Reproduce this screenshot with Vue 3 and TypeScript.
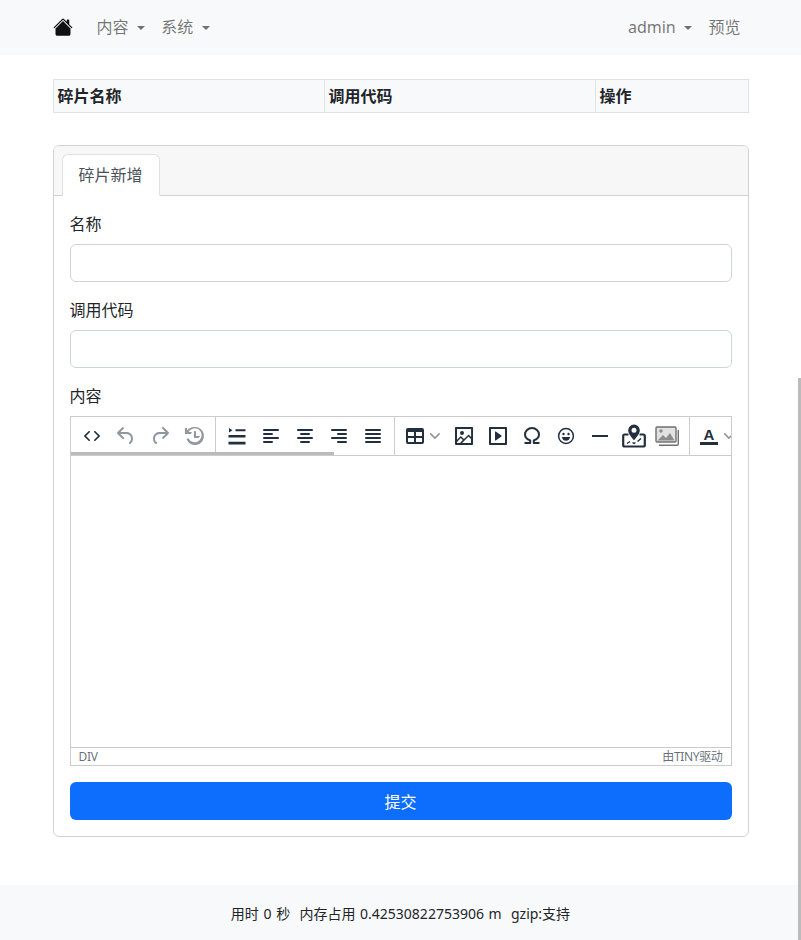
<script setup lang="ts">
interface Tool { name: string; paths: string[]; disabled?: boolean }

const alignLeft = 'M5 5h14a1 1 0 1 1 0 2H5a1 1 0 1 1 0-2zm0 4h8a1 1 0 1 1 0 2H5a1 1 0 1 1 0-2zm0 8h8a1 1 0 1 1 0 2H5a1 1 0 0 1 0-2zm0-4h14a1 1 0 1 1 0 2H5a1 1 0 0 1 0-2z'
const alignCenter = 'M5 5h14a1 1 0 1 1 0 2H5a1 1 0 1 1 0-2zm3 4h8a1 1 0 1 1 0 2H8a1 1 0 1 1 0-2zm0 8h8a1 1 0 1 1 0 2H8a1 1 0 0 1 0-2zm-3-4h14a1 1 0 1 1 0 2H5a1 1 0 0 1 0-2z'
const alignRight = 'M5 5h14a1 1 0 1 1 0 2H5a1 1 0 1 1 0-2zm6 4h8a1 1 0 1 1 0 2h-8a1 1 0 1 1 0-2zm0 8h8a1 1 0 1 1 0 2h-8a1 1 0 0 1 0-2zm-6-4h14a1 1 0 1 1 0 2H5a1 1 0 0 1 0-2z'
const alignJustify = 'M5 5h14a1 1 0 1 1 0 2H5a1 1 0 1 1 0-2zm0 4h14a1 1 0 1 1 0 2H5a1 1 0 1 1 0-2zm0 4h14a1 1 0 1 1 0 2H5a1 1 0 0 1 0-2zm0 4h14a1 1 0 1 1 0 2H5a1 1 0 0 1 0-2z'

const historyTools: Tool[] = [
  { name: 'source', paths: ['M9.8 15.7c.3.3.3.8 0 1-.3.4-.9.4-1.2 0l-4.4-4.1a.8.8 0 0 1 0-1.2l4.4-4.2c.3-.3.9-.3 1.2 0 .3.3.3.8 0 1.1L6 12l3.8 3.7zM14.2 15.7c-.3.3-.3.8 0 1 .3.4.9.4 1.2 0l4.4-4.1c.3-.3.3-.9 0-1.2l-4.4-4.2a.8.8 0 0 0-1.2 0c-.3.3-.3.8 0 1.1L18 12l-3.8 3.7z'] },
  { name: 'undo', disabled: true, paths: ['M6.4 8H12c3.7 0 6.2 2 6.8 5.1.6 2.7-.4 5.6-2.3 6.8a1 1 0 0 1-1-1.8c1.1-.7 1.8-2.7 1.4-4.6-.5-2.1-2.1-3.5-4.9-3.5H6.4l3.3 3.3a1 1 0 1 1-1.4 1.4l-5-5a1 1 0 0 1 0-1.4l5-5a1 1 0 0 1 1.4 1.4L6.4 8z'] },
  { name: 'redo', disabled: true, paths: ['M17.6 10H12c-2.8 0-4.4 1.4-4.9 3.5-.4 2 .3 4 1.4 4.6a1 1 0 1 1-1 1.8c-2-1.2-2.9-4.1-2.3-6.8.6-3 3-5.1 6.8-5.1h5.6l-3.3-3.3a1 1 0 1 1 1.4-1.4l5 5a1 1 0 0 1 0 1.4l-5 5a1 1 0 0 1-1.4-1.4l3.3-3.3z'] },
  { name: 'restore', disabled: true, paths: ['M17 13c0 .6-.4 1-1 1h-4V8c0-.6.4-1 1-1s1 .4 1 1v4h3c.6 0 1 .4 1 1z', 'M13 3a9 9 0 1 1-8.5 12l1.9-.7A7 7 0 1 0 6.5 8H9.8l-.8 2H3V4h2v2.6A9 9 0 0 1 13 3z'] }
]
const alignTools: Tool[] = [
  { name: 'lineheight', paths: ['M3.5 17.800h17v2.600h-17zM3.500 11h17v2.600h-17zM10.500 5.200h10v2h-10zM4 4l3.500 2.200L4 8.400z'] },
  { name: 'left', paths: [alignLeft] },
  { name: 'center', paths: [alignCenter] },
  { name: 'right', paths: [alignRight] },
  { name: 'justify', paths: [alignJustify] }
]
const insertTools: Tool[] = [
  { name: 'image', paths: ['M5 15.7l3.3-3.2c.3-.3.7-.3 1 0L12 15l4.1-4c.3-.4.8-.4 1 0l2 1.900V5H5v10.700zM5 18v1h3l2.800-2.900-2-2L5 17.900zm14-3l-2.500-2.400-6.400 6.500H19v-4zM4 3h16c.6 0 1 .4 1 1v16c0 .6-.4 1-1 1H4a1 1 0 0 1-1-1V4c0-.6.4-1 1-1zm6 8a2 2 0 1 0 0-4 2 2 0 0 0 0 4z'] },
  { name: 'media', paths: ['M4 3h16c.6 0 1 .4 1 1v16c0 .6-.4 1-1 1H4a1 1 0 0 1-1-1V4c0-.6.4-1 1-1zm1 2v14h14V5H5zm4.800 2.600l5.600 4a.5.5 0 0 1 0 .8l-5.600 4A.5.5 0 0 1 9 16V8a.5.5 0 0 1 .8-.4z'] }
]
</script>

<template>
  <div class="page">
    <nav class="navbar">
      <div class="navbar-inner">
        <div class="nav-group">
          <a class="brand" aria-label="首页">
            <svg viewBox="0 0 16 16" width="20" height="20" fill="#111">
              <path d="M8.707 1.5a1 1 0 0 0-1.414 0L.646 8.146a.5.5 0 0 0 .708.708L8 2.207l6.646 6.647a.5.5 0 0 0 .708-.708L13 5.793V2.500a.5.5 0 0 0-.5-.5h-1a.5.5 0 0 0-.5.5v1.293L8.707 1.500Z" />
              <path d="m8 3.293 6 6V13.500a1.500 1.500 0 0 1-1.500 1.500h-9A1.500 1.500 0 0 1 2 13.500V9.293l6-6Z" />
            </svg>
          </a>
          <a class="nav-link">内容 <span class="caret"></span></a>
          <a class="nav-link">系统 <span class="caret"></span></a>
        </div>
        <div class="nav-group">
          <a class="nav-link">admin <span class="caret"></span></a>
          <a class="nav-link">预览</a>
        </div>
      </div>
    </nav>

    <main class="container">
      <table class="fragments">
        <thead>
          <tr>
            <th class="col-name">碎片名称</th>
            <th class="col-name">调用代码</th>
            <th>操作</th>
          </tr>
        </thead>
      </table>

      <section class="card">
        <header class="card-header">
          <div class="tab">碎片新增</div>
        </header>
        <form class="card-body" @submit.prevent>
          <div class="field">
            <label>名称</label>
            <input type="text" />
          </div>
          <div class="field">
            <label>调用代码</label>
            <input type="text" />
          </div>
          <div class="field">
            <label>内容</label>
            <div class="editor">
              <div class="toolbar">
                <div class="tool-group">
                  <span v-for="t in historyTools" :key="t.name" class="tool" :class="{ disabled: t.disabled }">
                    <svg viewBox="0 0 24 24" width="24" height="24"><path v-for="p in t.paths" :key="p" :d="p" /></svg>
                  </span>
                </div>
                <div class="tool-group">
                  <span v-for="t in alignTools" :key="t.name" class="tool">
                    <svg viewBox="0 0 24 24" width="24" height="24"><path v-for="p in t.paths" :key="p" :d="p" /></svg>
                  </span>
                </div>
                <div class="tool-group">
                  <span class="split">
                    <svg viewBox="0 0 24 24" width="24" height="24"><path d="M19 4a2 2 0 0 1 2 2v12a2 2 0 0 1-2 2H5a2 2 0 0 1-2-2V6c0-1.100.9-2 2-2h14zM5 14v4h6v-4H5zm14 0h-6v4h6v-4zm0-6h-6v4h6V8zM5 12h6V8H5v4z" /></svg>
                    <svg class="chevron" viewBox="0 0 10 10" width="10" height="10"><path d="M8.700 2.200c.3-.3.800-.3 1 0 .4.300.4.900 0 1.200L5.500 7.700c-.3.300-.9.300-1.200 0L.2 3.400a.8.8 0 0 1 0-1.200c.3-.3.800-.3 1.100 0L5 6l3.700-3.800z" /></svg>
                  </span>
                  <span v-for="t in insertTools" :key="t.name" class="tool">
                    <svg viewBox="0 0 24 24" width="24" height="24"><path v-for="p in t.paths" :key="p" :d="p" /></svg>
                  </span>
                  <span class="tool">
                    <svg viewBox="0 0 24 24" width="24" height="24"><path class="line" d="M4.500 19h5.700v-2.600C7 15.300 5 13.100 5 10.500a7 6.500 0 0 1 14 0c0 2.600-2 4.800-5.200 5.900V19h5.700" /></svg>
                  </span>
                  <span class="tool">
                    <svg viewBox="0 0 24 24" width="24" height="24">
                      <circle class="line thin" cx="12" cy="12" r="7.400" />
                      <circle cx="9.500" cy="10" r="1.200" />
                      <circle cx="14.500" cy="10" r="1.200" />
                      <path d="M8 13h8c0 2.400-1.800 3.800-4 3.800S8 15.400 8 13z" />
                    </svg>
                  </span>
                  <span class="tool">
                    <svg viewBox="0 0 24 24" width="24" height="24"><path d="M4 11h16v2H4z" /></svg>
                  </span>
                  <span class="tool">
                    <svg viewBox="0 0 24 24" width="24" height="24">
                      <path class="line thick" d="M6.500 10.500H2.600A1.400 1.400 0 0 0 1.200 12v9a1.500 1.500 0 0 0 1.500 1.500h18.600a1.500 1.500 0 0 0 1.500-1.500v-9a1.400 1.400 0 0 0-1.400-1.500h-3.900" />
                      <path fill-rule="evenodd" d="M12 .5a5.800 5.800 0 0 0-5.800 5.800c0 3.300 3.400 7.200 5.800 10 2.400-2.800 5.800-6.700 5.800-10A5.800 5.800 0 0 0 12 .5zm0 3.300a2.500 2.500 0 1 1 0 5 2.500 2.500 0 0 1 0-5z" />
                      <path class="line thin" d="M5 19.500 8 17.500M10.500 18.500l1.500 1 1.500-1M15.500 17.500l3.500-3" />
                    </svg>
                  </span>
                  <span class="tool">
                    <svg class="gallery" viewBox="0 0 24 20" width="24" height="20">
                      <rect x="1" y="1" width="20" height="15" rx="1" fill="#e2e2e2" stroke="#6f6f6f" stroke-width="1.400" />
                      <path d="M23.300 4v14a1.300 1.300 0 0 1-1.300 1.300H4" fill="none" stroke="#6f6f6f" stroke-width="1.400" />
                      <path d="M2.500 14.500 8 9l3 3 4-5 4.500 7.500z" fill="#8b8b8b" />
                      <circle cx="6" cy="5" r="1.700" fill="#8b8b8b" />
                    </svg>
                  </span>
                </div>
                <div class="tool-group last">
                  <span class="split">
                    <svg viewBox="0 0 24 24" width="24" height="24">
                      <text class="letter" x="12" y="15.500" text-anchor="middle">A</text>
                      <path d="M3 18h18v3H3z" />
                    </svg>
                    <svg class="chevron" viewBox="0 0 10 10" width="10" height="10"><path d="M8.700 2.200c.3-.3.800-.3 1 0 .4.300.4.900 0 1.200L5.500 7.700c-.3.300-.9.300-1.200 0L.2 3.400a.8.8 0 0 1 0-1.200c.3-.3.800-.3 1.100 0L5 6l3.700-3.800z" /></svg>
                  </span>
                </div>
                <span class="toolbar-scroll"></span>
              </div>
              <div class="edit-area"></div>
              <div class="statusbar">
                <span>DIV</span>
                <span>由TINY驱动</span>
              </div>
            </div>
          </div>
          <button type="submit" class="submit">提交</button>
        </form>
      </section>
    </main>

    <footer class="footer">用时 0 秒&nbsp; 内存占用 0.42530822753906 m&nbsp; gzip:支持</footer>

    <span class="page-scroll"></span>
  </div>
</template>

<style>
html, body { margin: 0; overflow: hidden; background: #fff; }
</style>

<style scoped>
.page {
  font-family: "Noto Sans", "Noto Sans CJK SC", sans-serif;
  font-size: 16px;
  line-height: 24px;
  color: #212529;
}
.navbar {
  box-sizing: border-box;
  background: #f8f9fa;
  height: 55px;
  padding-bottom: 2px;
  display: flex;
  align-items: center;
}
.navbar-inner {
  width: 696px;
  margin: 0 auto;
  display: flex;
  justify-content: space-between;
  align-items: center;
}
.nav-group { display: flex; align-items: center; }
.brand { display: flex; margin-right: 16px; }
.nav-link { padding: 8px; color: rgba(0, 0, 0, .55); white-space: pre; }
.caret {
  display: inline-block;
  margin-left: 4.6px;
  vertical-align: 3px;
  border-top: 4.8px solid;
  border-left: 4.8px solid transparent;
  border-right: 4.8px solid transparent;
}
.container { width: 696px; margin: 0 auto; padding-top: 24px; }
.fragments {
  width: 696px;
  border-collapse: collapse;
  table-layout: fixed;
  margin-bottom: 32px;
}
.fragments th {
  box-sizing: border-box;
  border: 1px solid #dee2e6;
  background: #f8f9fa;
  padding: 4px;
  text-align: left;
  font-weight: 700;
}
.fragments th.col-name { width: 271px; }
.card { border: 1px solid #d2d2d2; border-radius: 6px; }
.card-header {
  background: #f7f7f7;
  padding: 8px 8px 0;
  border-bottom: 1px solid #d2d2d2;
  border-radius: 5px 5px 0 0;
  display: flex;
}
.tab {
  margin-bottom: -1px;
  padding: 8px 16px;
  background: #fff;
  color: #495057;
  border: 1px solid #dee2e6;
  border-bottom-color: #fff;
  border-radius: 6px 6px 0 0;
}
.card-body { padding: 16px; }
.field { margin-bottom: 16px; }
.field label { display: block; margin-bottom: 8px; }
.field input {
  display: block;
  box-sizing: border-box;
  width: 100%;
  height: 38px;
  border: 1px solid #ced4da;
  border-radius: 6px;
  background: #fff;
}
.editor { border: 1px solid #ccc; }
.toolbar {
  position: relative;
  display: flex;
  height: 38px;
  border-bottom: 1px solid #ccc;
  overflow: hidden;
  white-space: nowrap;
}
.tool-group {
  display: flex;
  flex: none;
  padding: 0 4px;
  border-right: 1px solid #ccc;
  height: 38px;
}
.tool-group.last { border-right: 0; padding-left: 3px; }
.tool, .split { display: flex; align-items: center; height: 38px; flex: none; }
.tool { width: 34px; justify-content: center; }
.split { width: 48px; padding-left: 4px; box-sizing: border-box; }
.tool svg, .split svg { fill: #222f3e; }
.tool.disabled svg { fill: rgba(34, 47, 62, .5); }
.tool svg.gallery { margin-left: -1px; }
.split svg.chevron { fill: rgba(34, 47, 62, .5); margin-left: 3px; flex: none; }
.tool svg .line { fill: none; stroke: #222f3e; stroke-width: 2; stroke-linejoin: round; }
.tool svg .line.thin { stroke-width: 1.500; }
.tool svg .line.thick { stroke-width: 2.200; }
.letter { font-family: "Liberation Sans", sans-serif; font-size: 15px; font-weight: 700; }
.toolbar-scroll {
  position: absolute;
  left: 0;
  bottom: 0;
  width: 263px;
  height: 3px;
  background: #bbb;
}
.edit-area { height: 291px; }
.statusbar {
  display: flex;
  justify-content: space-between;
  box-sizing: border-box;
  height: 18px;
  padding: 0 8px;
  border-top: 1px solid #ccc;
  font-size: 12px;
  letter-spacing: -.35px;
  line-height: 18px;
  color: rgba(34, 47, 62, .7);
}
.submit {
  display: block;
  width: 100%;
  height: 38px;
  padding: 2px 0 0;
  border: 0;
  border-radius: 6px;
  background: #0d6efd;
  color: #fff;
  font: inherit;
}
.footer {
  margin-top: 48px;
  background: #f8f9fa;
  padding: 17px 0 14px;
  text-align: center;
  font-size: 14px;
  word-spacing: 1px;
  line-height: 24px;
  color: #212529;
}
.page-scroll {
  position: fixed;
  right: 0;
  top: 378px;
  bottom: 0;
  width: 3px;
  background: #bbb;
}
</style>
